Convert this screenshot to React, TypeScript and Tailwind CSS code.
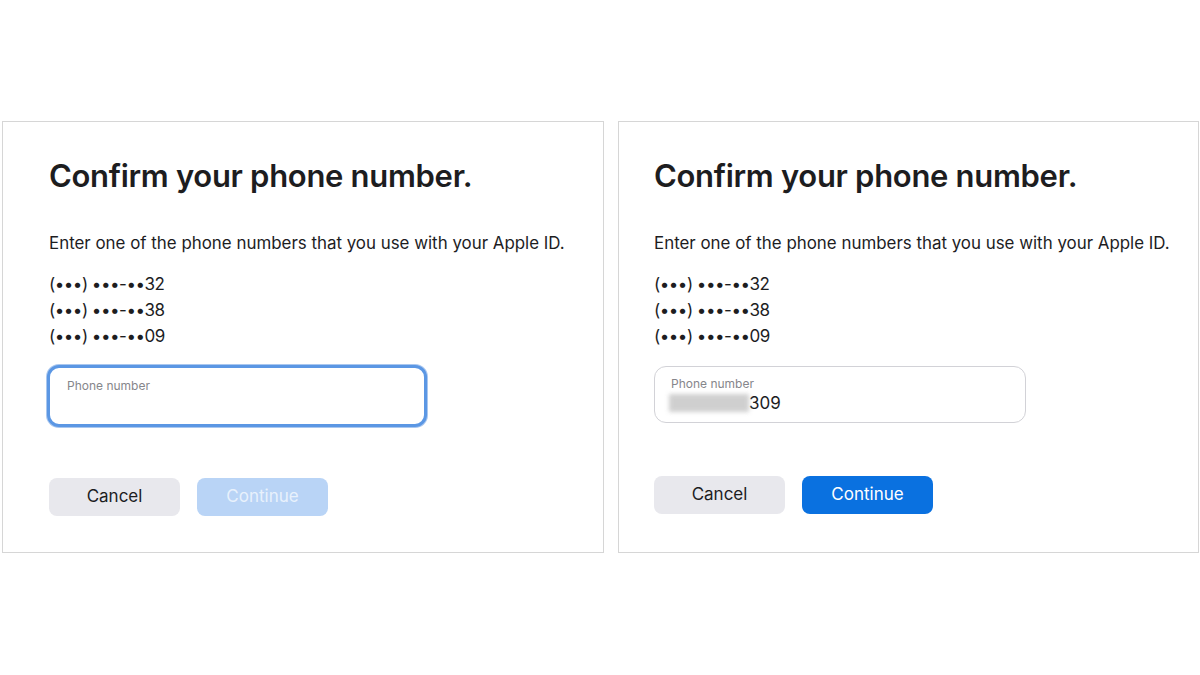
const phones = ["(•••) •••-••32", "(•••) •••-••38", "(•••) •••-••09"];

function Panel({
  className,
  filled,
}: {
  className: string;
  filled?: boolean;
}) {
  return (
    <section
      className={`flex h-[432px] flex-col border border-[#d6d6d6] bg-white text-[#1d1d1f] ${className}`}
    >
      <h1 className="mt-[35px] text-[31px] font-semibold leading-[38px] tracking-[-0.3px]">
        Confirm your phone number.
      </h1>
      <p className="mt-[37px] text-[16.9px] leading-[22px]">
        Enter one of the phone numbers that you use with your Apple ID.
      </p>
      <ul className="mt-[17px] text-[17px] leading-[26px] tracking-[-0.5px]">
        {phones.map((p) => (
          <li key={p}>{p}</li>
        ))}
      </ul>
      {filled ? (
        <div className="relative mt-[17px] h-[57px] w-[372px] rounded-[12px] border border-[#d2d2d7] bg-white">
          <span className="absolute left-[16px] top-[8px] text-[12px] text-[#86868b]">
            Phone number
          </span>
          <div className="absolute left-[14px] top-[25px] flex items-center">
            <div className="h-[18px] w-[80px] bg-[#c4c4c4] opacity-80 blur-[2px]" />
            <span className="text-[17px] leading-[22px]">309</span>
          </div>
        </div>
      ) : (
        <div className="relative mt-[16px] h-[62px] w-[380px] -ml-[2px] rounded-[12px] border-[3px] border-[#5b97e4] bg-white shadow-[0_0_0_1px_#a9c7ef]">
          <span className="absolute left-[17px] top-[9px] text-[12px] text-[#86868b]">
            Phone number
          </span>
        </div>
      )}
      <div className={`flex gap-[17px] ${filled ? "mt-[53px]" : "mt-[51px]"}`}>
        <button className="h-[38px] w-[131px] rounded-[8px] bg-[#e8e8ed] text-[17px] text-[#1d1d1f]">
          Cancel
        </button>
        <button
          className={`h-[38px] w-[131px] rounded-[8px] text-[17px] ${
            filled ? "bg-[#0a71e0] text-white" : "bg-[#b9d4f6] text-[#e8f1fc]"
          }`}
        >
          Continue
        </button>
      </div>
    </section>
  );
}

export default function App() {
  return (
    <div
      className="flex h-[675px] w-[1200px] items-start gap-[14px] bg-white pl-[2px] pt-[121px]"
      style={{ fontFamily: "Inter, 'Liberation Sans', sans-serif" }}
    >
      <Panel className="w-[602px] pl-[46px]" />
      <Panel className="w-[581px] pl-[35px]" filled />
    </div>
  );
}
